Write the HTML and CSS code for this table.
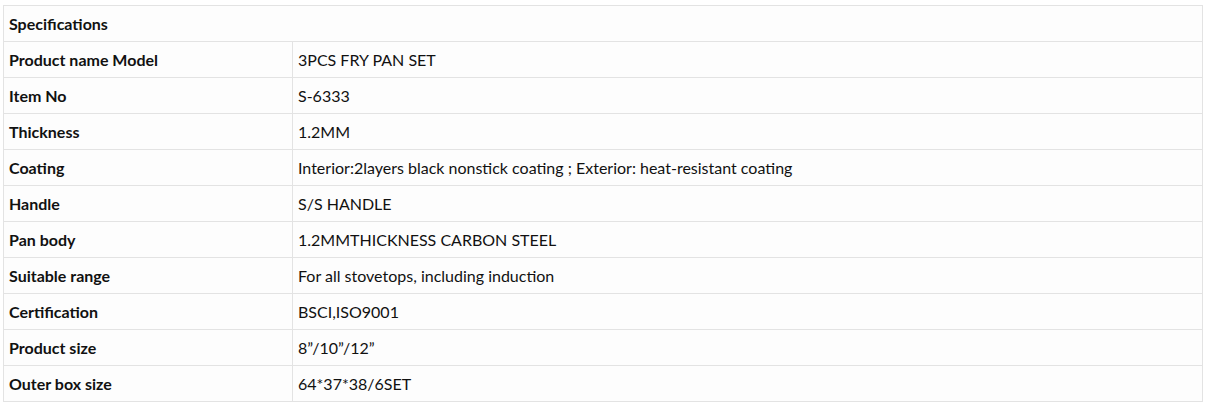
FILE: index.html
```html
<!DOCTYPE html>
<html>
<head>
<meta charset="utf-8">
<link rel="stylesheet" href="styles.css">
</head>
<body>
<table class="spec">
  <colgroup><col class="label-col"><col class="value-col"></colgroup>
  <tr><th colspan="2">Specifications</th></tr>
  <tr><th>Product name Model</th><td>3PCS FRY PAN SET</td></tr>
  <tr><th>Item No</th><td>S-6333</td></tr>
  <tr><th>Thickness</th><td>1.2MM</td></tr>
  <tr><th>Coating</th><td>Interior:2layers black nonstick coating ; Exterior: heat-resistant coating</td></tr>
  <tr><th>Handle</th><td>S/S HANDLE</td></tr>
  <tr><th>Pan body</th><td>1.2MMTHICKNESS CARBON STEEL</td></tr>
  <tr><th>Suitable range</th><td>For all stovetops, including induction</td></tr>
  <tr><th>Certification</th><td>BSCI,ISO9001</td></tr>
  <tr><th>Product size</th><td>8”/10”/12”</td></tr>
  <tr><th>Outer box size</th><td>64*37*38/6SET</td></tr>
</table>
</body>
</html>
```
FILE: styles.css
```css
html, body { margin: 0; background: #fff; }
body { padding: 5px 3px; font-family: Lato, "Open Sans", sans-serif; font-size: 16px; color: #111; }
.spec { border-collapse: collapse; width: 1200px; background: #fdfdfd; table-layout: fixed; }
.label-col { width: 289px; }
.spec th, .spec td { border: 1px solid #e3e3e3; height: 36px; padding: 0 5px; text-align: left; vertical-align: middle; box-sizing: border-box; }
.spec th { font-weight: bold; }
.spec td { font-weight: normal; }
```
